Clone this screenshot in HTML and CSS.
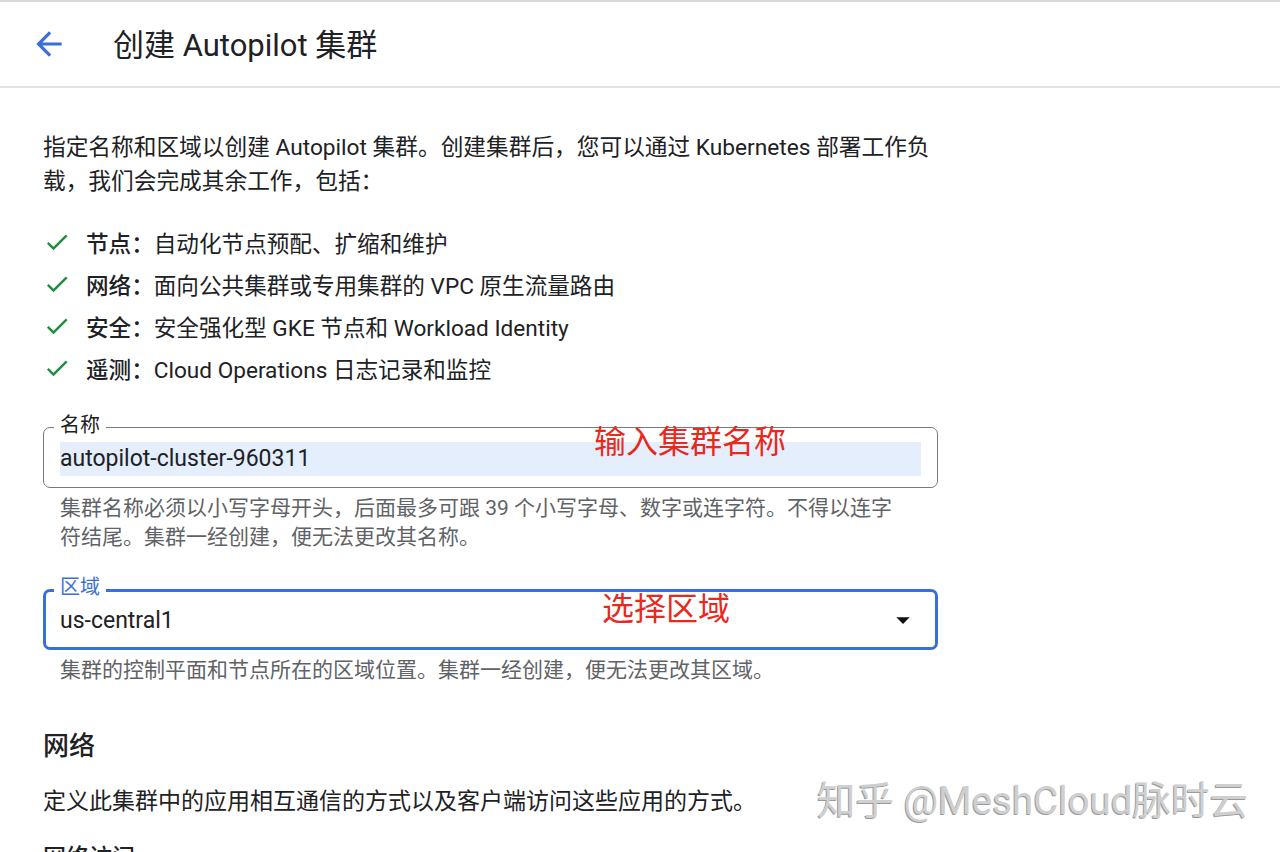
FILE: index.html
```html
<!DOCTYPE html>
<html lang="zh-CN">
<head>
    <meta charset="UTF-8">
    <meta name="viewport" content="width=device-width, initial-scale=1.0">
    <title>创建 Autopilot 集群</title>
    <link rel="stylesheet" href="styles.css">
</head>
<body>
    <header class="header">
        <svg class="back" viewBox="0 0 24 24"><path d="M20 11H7.83l5.59-5.59L12 4l-8 8 8 8 1.41-1.41L7.83 13H20v-2z"/></svg>
        <h1 class="title">创建 Autopilot 集群</h1>
    </header>

    <main class="content">
        <p class="intro">指定名称和区域以创建 Autopilot 集群。创建集群后，您可以通过 Kubernetes 部署工作负载，我们会完成其余工作，包括：</p>

        <ul class="features">
            <li>
                <svg class="check" viewBox="0 0 24 24"><path d="M9 16.17L4.83 12l-1.42 1.41L9 19 21 7l-1.41-1.41z"/></svg>
                <span><b>节点：</b>自动化节点预配、扩缩和维护</span>
            </li>
            <li>
                <svg class="check" viewBox="0 0 24 24"><path d="M9 16.17L4.83 12l-1.42 1.41L9 19 21 7l-1.41-1.41z"/></svg>
                <span><b>网络：</b>面向公共集群或专用集群的 VPC 原生流量路由</span>
            </li>
            <li>
                <svg class="check" viewBox="0 0 24 24"><path d="M9 16.17L4.83 12l-1.42 1.41L9 19 21 7l-1.41-1.41z"/></svg>
                <span><b>安全：</b>安全强化型 GKE 节点和 Workload Identity</span>
            </li>
            <li>
                <svg class="check" viewBox="0 0 24 24"><path d="M9 16.17L4.83 12l-1.42 1.41L9 19 21 7l-1.41-1.41z"/></svg>
                <span><b>遥测：</b>Cloud Operations 日志记录和监控</span>
            </li>
        </ul>

        <div class="field">
            <div class="box">
                <span class="label">名称</span>
                <div class="value selected">autopilot-cluster-960311</div>
                <span class="note">输入集群名称</span>
            </div>
            <p class="hint">集群名称必须以小写字母开头，后面最多可跟 39 个小写字母、数字或连字符。不得以连字符结尾。集群一经创建，便无法更改其名称。</p>
        </div>

        <div class="field">
            <div class="box focused">
                <span class="label">区域</span>
                <div class="value">us-central1</div>
                <span class="note note-region">选择区域</span>
                <svg class="caret" viewBox="0 0 24 24"><path d="M7 10l5 5 5-5z"/></svg>
            </div>
            <p class="hint">集群的控制平面和节点所在的区域位置。集群一经创建，便无法更改其区域。</p>
        </div>

        <h2 class="section">网络</h2>
        <p class="section-text">定义此集群中的应用相互通信的方式以及客户端访问这些应用的方式。</p>
        <h3 class="subsection">网络访问</h3>
    </main>

    <div class="watermark">知乎 @MeshCloud脉时云</div>
</body>
</html>
```

FILE: styles.css
```css
/* Page base */
html, body {
    margin: 0;
    padding: 0;
    height: 100%;
    overflow: hidden;
}

body {
    background: #fff;
    color: #202124;
    font-family: Roboto, "Noto Sans CJK SC", sans-serif;
    border-top: 2px solid #d9d9d9;
    box-sizing: border-box;
}

/* Top bar */
.header {
    display: flex;
    align-items: center;
    height: 84px;
    border-bottom: 2px solid #e3e3e3;
    padding-left: 30px;
}

.back {
    width: 38px;
    height: 38px;
    fill: #3b6fd8;
}

.title {
    margin: -4px 0 0 45px;
    font-size: 31px;
    font-weight: 400;
    color: #202124;
}

/* Main form column */
.content {
    width: 895px;
    padding: 43px 0 0 43px;
}

.intro {
    width: 900px;
    margin: 0;
    font-size: 22.7px;
    line-height: 34px;
}

.features {
    list-style: none;
    margin: 27px 0 0;
    padding: 0;
    display: flex;
    flex-direction: column;
    gap: 10px;
}

.features li {
    display: flex;
    align-items: center;
    gap: 15px;
    height: 32px;
    font-size: 22.6px;
}

.features b {
    font-weight: 500;
}

.check {
    width: 28px;
    height: 28px;
    fill: #1e8e3e;
}

/* Outlined fields */
.field {
    margin-top: 43px;
}

.field + .field {
    margin-top: 37px;
}

.box {
    position: relative;
    box-sizing: border-box;
    height: 61px;
    border: 1.5px solid #7a7a7a;
    border-radius: 7px;
    display: flex;
    align-items: center;
    padding: 0 16px;
}

.box.focused {
    border: 3px solid #3b6fd8;
    padding: 0 14px;
}

.label {
    position: absolute;
    top: -15px;
    left: 10px;
    padding: 0 6px;
    background: #fff;
    font-size: 20px;
    line-height: 24px;
    color: #202124;
}

.focused .label {
    top: -17px;
    left: 8px;
    color: #3b6fd8;
}

.value {
    flex: 1;
    font-size: 23px;
    line-height: 34px;
    margin-top: 2px;
}

.value.selected {
    background: #e4eefc;
}

.note {
    position: absolute;
    top: -12px;
    left: 550px;
    font-size: 32px;
    color: #e8291d;
}

.note-region {
    top: -9px;
    left: 556px;
}

.caret {
    width: 32px;
    height: 32px;
    fill: #111;
    margin-right: 2px;
}

.hint {
    margin: 6px 0 0;
    padding: 0 30px 0 17px;
    font-size: 21px;
    line-height: 29px;
    color: #5f6368;
}

/* Section below the fields */
.section {
    margin: 40px 0 0;
    font-size: 26px;
    font-weight: 500;
}

.section-text {
    margin: 20px 0 0;
    font-size: 23px;
}

.subsection {
    margin: 22px 0 0;
    font-size: 23px;
    font-weight: 500;
}

/* Site watermark */
.watermark {
    position: absolute;
    left: 817px;
    top: 769px;
    font-size: 38.5px;
    color: #cfcfcf;
    text-shadow: -1px 1px 0 #9a9a9a;
    white-space: nowrap;
}
```
